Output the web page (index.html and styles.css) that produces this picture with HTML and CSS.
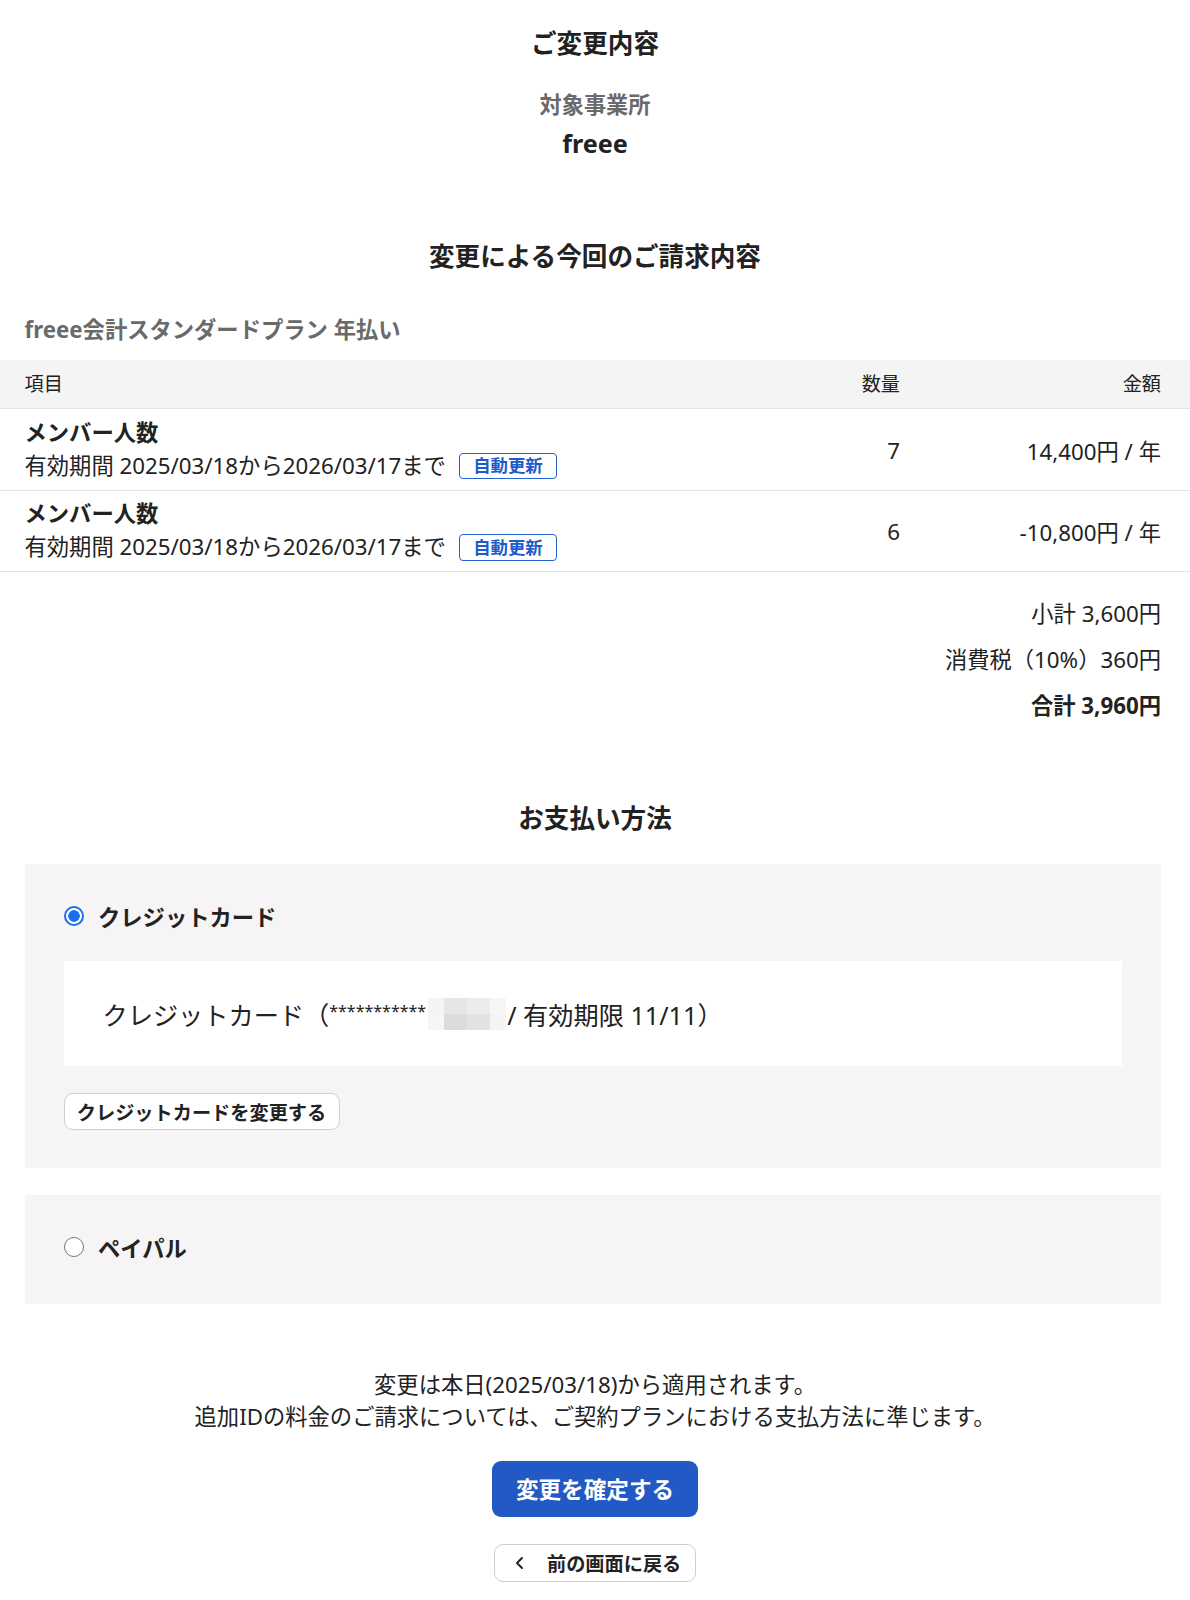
FILE: index.html
```html
<!DOCTYPE html>
<html lang="ja">
<head>
<meta charset="utf-8">
<title>ご変更内容</title>
<link rel="stylesheet" href="styles.css">
</head>
<body>
<main class="page">
  <section class="office-block">
    <h1 class="section-title first">ご変更内容</h1>
    <p class="office-label">対象事業所</p>
    <p class="office-name">freee</p>
  </section>

  <h2 class="section-title billing-title">変更による今回のご請求内容</h2>
  <p class="plan-name">freee会計スタンダードプラン 年払い</p>

  <div class="items">
    <div class="items-row items-head">
      <div class="col-item">項目</div>
      <div class="col-qty">数量</div>
      <div class="col-amount">金額</div>
    </div>
    <div class="items-row">
      <div class="col-item">
        <div class="item-name">メンバー人数</div>
        <div class="item-period">有効期間 2025/03/18から2026/03/17まで<span class="badge">自動更新</span></div>
      </div>
      <div class="col-qty">7</div>
      <div class="col-amount">14,400円 / 年</div>
    </div>
    <div class="items-row">
      <div class="col-item">
        <div class="item-name">メンバー人数</div>
        <div class="item-period">有効期間 2025/03/18から2026/03/17まで<span class="badge">自動更新</span></div>
      </div>
      <div class="col-qty">6</div>
      <div class="col-amount">-10,800円 / 年</div>
    </div>
  </div>

  <div class="totals">
    <div class="total-line">小計 3,600円</div>
    <div class="total-line">消費税（10%）360円</div>
    <div class="total-line grand">合計 3,960円</div>
  </div>

  <h2 class="section-title payment-title">お支払い方法</h2>

  <div class="methods">
    <div class="method-card">
      <label class="method-option">
        <span class="radio checked"></span>
        <span class="method-label">クレジットカード</span>
      </label>
      <div class="card-info">
        クレジットカード（<span class="stars">***********</span><span class="masked"></span>/ 有効期限 11/11）
      </div>
      <button class="btn-secondary change-card">クレジットカードを変更する</button>
    </div>
    <div class="method-card paypal">
      <label class="method-option">
        <span class="radio"></span>
        <span class="method-label">ペイパル</span>
      </label>
    </div>
  </div>

  <div class="notice">
    <p>変更は本日(2025/03/18)から適用されます。</p>
    <p>追加IDの料金のご請求については、ご契約プランにおける支払方法に準じます。</p>
  </div>

  <div class="actions">
    <button class="btn-primary">変更を確定する</button>
    <button class="btn-secondary back">
      <svg class="chev" width="12" height="14" viewBox="0 0 12 14"><path d="M8 2 L3 7 L8 12" fill="none" stroke="#222" stroke-width="2" stroke-linecap="round" stroke-linejoin="round"/></svg>
      <span>前の画面に戻る</span>
    </button>
  </div>
</main>
</body>
</html>
```

FILE: styles.css
```css
* { box-sizing: border-box; }

body {
  margin: 0;
  background: #fff;
  color: #222;
  font-family: "Noto Sans", "Noto Sans CJK JP", "Liberation Sans", sans-serif;
}

.page {
  width: 100%;
  padding-bottom: 10px;
}

p { margin: 0; }

.section-title {
  margin: 0;
  text-align: center;
  font-size: 25.6px;
  font-weight: 700;
  line-height: 36px;
  color: #222;
}

.section-title.first { padding-top: 26px; }

.office-label {
  margin-top: 27px;
  text-align: center;
  font-size: 22.2px;
  font-weight: 700;
  line-height: 32px;
  color: #6a6a6a;
}

.office-name {
  margin-top: 5px;
  text-align: center;
  font-size: 25.2px;
  font-weight: 700;
  line-height: 34px;
  color: #222;
}

.billing-title { margin-top: 79px; }

.plan-name {
  margin-top: 38.5px;
  padding-left: 24.5px;
  font-size: 22.3px;
  font-weight: 700;
  line-height: 32px;
  color: #6a6a6a;
}

.items { margin-top: 14.5px; }

.items-row {
  display: grid;
  grid-template-columns: 1fr 200px 261px;
  align-items: center;
  padding: 7.5px 29px 5.6px 24.5px;
  border-bottom: 1px solid #e3e3e3;
  font-size: 22.3px;
}

.items-head {
  height: 49px;
  padding-top: 0;
  padding-bottom: 0;
  background: #f5f4f4;
  font-size: 19.2px;
  line-height: 24px;
  color: #222;
}

.col-qty, .col-amount { text-align: right; }

.item-name {
  font-weight: 700;
  line-height: 31px;
}

.item-period {
  line-height: 36.5px;
  display: flex;
  align-items: center;
}

.badge {
  display: inline-flex;
  align-items: center;
  justify-content: center;
  margin-left: 13px;
  width: 98px;
  height: 26.5px;
  border: 1.5px solid #2463d2;
  border-radius: 4px;
  color: #1d5bc9;
  font-size: 17.4px;
  font-weight: 700;
  line-height: 1;
}

.totals {
  padding: 19px 29px 0 0;
  text-align: right;
  font-size: 22.3px;
  line-height: 46px;
}

.total-line.grand { font-weight: 700; }

.payment-title { margin-top: 72px; }

.methods {
  margin: 27px 29px 0 24.5px;
  display: flex;
  flex-direction: column;
  gap: 27px;
}

.method-card {
  background: #f6f4f5;
  padding: 37px 39px 38px;
}

.method-card.paypal { padding-bottom: 42px; }

.method-option {
  display: flex;
  align-items: center;
  height: 30px;
}

.radio {
  width: 20px;
  height: 20px;
  border-radius: 50%;
  border: 1px solid #767676;
  background: #fff;
  flex: none;
}

.radio.checked {
  border: 2px solid #1a6ef2;
  background: radial-gradient(circle, #1a6ef2 0 5.5px, #fff 6px);
}

.method-label {
  margin-left: 14.5px;
  font-size: 22.3px;
  font-weight: 700;
}

.card-info {
  margin-top: 30px;
  height: 105px;
  background: #fff;
  padding-left: 39px;
  display: flex;
  align-items: center;
  font-size: 25.2px;
  color: #222;
}

.stars {
  font-size: 16px;
  align-self: center;
  margin-top: -5px;
}

.masked {
  display: inline-block;
  width: 78px;
  height: 32px;
  margin: 0 1px 0 2px;
  background:
    linear-gradient(90deg, #f4f4f4 0 20%, #e6e6e6 20% 50%, #ececec 50% 80%, #f6f6f6 80%) top / 100% 50% no-repeat,
    linear-gradient(90deg, #f6f6f6 0 20%, #dcdcdc 20% 50%, #e2e2e2 50% 80%, #f4f4f4 80%) bottom / 100% 50% no-repeat;
}

.btn-secondary {
  font-family: inherit;
  background: #fff;
  border: 1px solid #cfcfcf;
  border-radius: 9px;
  color: #222;
  font-weight: 700;
  font-size: 19.2px;
  cursor: pointer;
}

.change-card {
  margin-top: 27px;
  height: 37px;
  width: 276px;
  padding: 0;
}

.notice {
  margin-top: 64.5px;
  text-align: center;
  font-size: 22.3px;
  line-height: 32.6px;
  color: #222;
}

.actions {
  margin-top: 27px;
  display: flex;
  flex-direction: column;
  align-items: center;
  gap: 27px;
}

.btn-primary {
  width: 206px;
  height: 56px;
  border: none;
  border-radius: 9px;
  background: #2359c5;
  color: #fff;
  font-family: inherit;
  font-size: 22.6px;
  font-weight: 700;
  cursor: pointer;
}

.back {
  width: 202px;
  height: 38px;
  display: flex;
  align-items: center;
  gap: 21px;
  padding: 0 0 0 19px;
}
```
